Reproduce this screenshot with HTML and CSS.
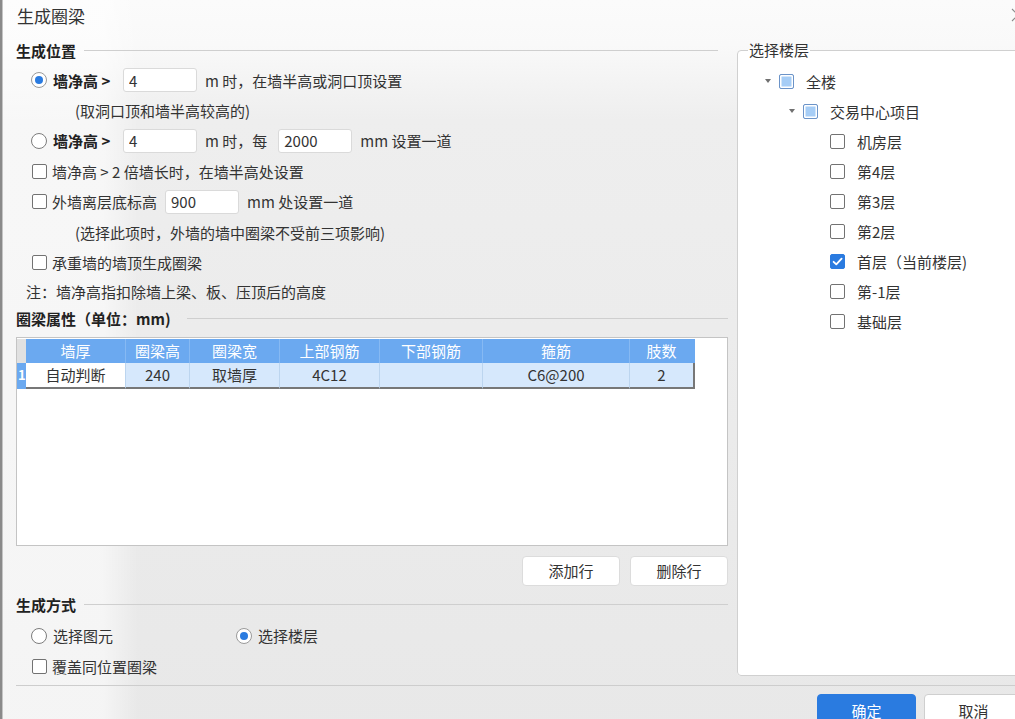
FILE: index.html
```html
<!DOCTYPE html>
<html lang="zh-CN">
<head>
<meta charset="utf-8">
<title>生成圈梁</title>
<link rel="stylesheet" href="styles.css">
</head>
<body>
<div class="dialog">
  <div class="titlebar">
    <span class="title">生成圈梁</span>
    <svg class="close" width="14" height="14" viewBox="0 0 14 14"><path d="M1 1 L13 13 M13 1 L1 13" stroke="#8a8a8a" stroke-width="1.1" fill="none"/></svg>
  </div>
  <div class="main">
    <div class="left">
      <div class="sec sec-first"><span>生成位置</span></div>
      <div class="opt">
        <span class="radio on"></span>
        <b class="lbl">墙净高 &gt;</b>
        <input class="inp" type="text" value="4">
        <span>m 时，在墙半高或洞口顶设置</span>
      </div>
      <div class="opt sub">(取洞口顶和墙半高较高的)</div>
      <div class="opt">
        <span class="radio"></span>
        <b class="lbl">墙净高 &gt;</b>
        <input class="inp" type="text" value="4">
        <span class="lbl2">m 时，每</span>
        <input class="inp" type="text" value="2000">
        <span>mm 设置一道</span>
      </div>
      <div class="opt">
        <span class="cb"></span>
        <span>墙净高 &gt; 2 倍墙长时，在墙半高处设置</span>
      </div>
      <div class="opt">
        <span class="cb"></span>
        <span>外墙离层底标高</span>
        <input class="inp" type="text" value="900">
        <span>mm 处设置一道</span>
      </div>
      <div class="opt sub">(选择此项时，外墙的墙中圈梁不受前三项影响)</div>
      <div class="opt">
        <span class="cb"></span>
        <span>承重墙的墙顶生成圈梁</span>
      </div>
      <div class="opt note">注：墙净高指扣除墙上梁、板、压顶后的高度</div>
      <div class="sec sec-second"><span>圈梁属性（单位：mm)</span></div>
      <div class="gridbox">
        <table class="grid">
          <colgroup>
            <col style="width:9px"><col style="width:100px"><col style="width:64px"><col style="width:90px"><col style="width:100px"><col style="width:103px"><col style="width:147px"><col style="width:65px">
          </colgroup>
          <thead>
            <tr><th class="corner"></th><th>墙厚</th><th>圈梁高</th><th>圈梁宽</th><th>上部钢筋</th><th>下部钢筋</th><th>箍筋</th><th class="hlast">肢数</th></tr>
          </thead>
          <tbody>
            <tr><td class="rh">1</td><td class="edit">自动判断</td><td>240</td><td>取墙厚</td><td>4C12</td><td></td><td>C6@200</td><td class="last">2</td></tr>
          </tbody>
        </table>
      </div>
      <div class="btns">
        <button class="btn">添加行</button>
        <button class="btn">删除行</button>
      </div>
      <div class="sec sec-third"><span>生成方式</span></div>
      <div class="opt choices">
        <span class="choice"><span class="radio"></span><span>选择图元</span></span>
        <span class="choice"><span class="radio on"></span><span>选择楼层</span></span>
      </div>
      <div class="opt">
        <span class="cb"></span>
        <span>覆盖同位置圈梁</span>
      </div>
    </div>
    <div class="right">
      <fieldset class="floors">
        <legend>选择楼层</legend>
        <div class="node l0"><span class="twist"></span><span class="cb part"></span><span>全楼</span></div>
        <div class="node l1"><span class="twist"></span><span class="cb part"></span><span>交易中心项目</span></div>
        <div class="node l2"><span class="cb"></span><span>机房层</span></div>
        <div class="node l2"><span class="cb"></span><span>第4层</span></div>
        <div class="node l2"><span class="cb"></span><span>第3层</span></div>
        <div class="node l2"><span class="cb"></span><span>第2层</span></div>
        <div class="node l2"><span class="cb checked"><svg width="13" height="13" viewBox="0 0 13 13"><path d="M2.6 6.8 L5.3 9.4 L10.6 3.6" stroke="#fff" stroke-width="1.8" fill="none" stroke-linecap="round" stroke-linejoin="round"/></svg></span><span>首层（当前楼层)</span></div>
        <div class="node l2"><span class="cb"></span><span>第-1层</span></div>
        <div class="node l2"><span class="cb"></span><span>基础层</span></div>
      </fieldset>
    </div>
  </div>
  <div class="footer">
    <button class="btn fbtn primary">确定</button>
    <button class="btn fbtn">取消</button>
  </div>
</div>
</body>
</html>
```

FILE: styles.css
```css
* { box-sizing: border-box; }
html, body { margin: 0; padding: 0; }
body {
  width: 1015px;
  height: 719px;
  overflow: hidden;
  background: #8a8a8a;
  font-family: "Noto Sans CJK SC", "Microsoft YaHei", sans-serif;
  font-size: 15px;
  color: #333;
}
.dialog {
  width: 1038px;
  height: 740px;
  margin-left: 2px;
  border-left: 1px solid #c4c4c4;
  background:
    linear-gradient(to right, rgba(255,255,255,0.55) 0, rgba(255,255,255,0.55) 100px, rgba(255,255,255,0) 135px),
    linear-gradient(to bottom, #fbfbfb 0, #f9f9f9 45px, #eeeeee 120px, #e8e8e8 100%);
}
.titlebar {
  height: 30px;
  display: flex;
  align-items: center;
  justify-content: space-between;
  padding: 0 15px 0 14px;
}
.title { font-size: 17px; color: #333; }
.close { display: block; }
.main {
  height: 655px;
  display: flex;
}
.left {
  width: 712px;
  margin-left: 13px;
  display: flex;
  flex-direction: column;
}
.right {
  flex: 1;
  margin-left: 9px;
  padding: 10px 0 9px 0;
}
.sec {
  height: 28px;
  display: flex;
  align-items: center;
  font-weight: bold;
  color: #222;
  flex-shrink: 0;
}
.sec::after {
  content: "";
  flex: 1;
  border-top: 1px solid #cfcfcf;
  margin-left: 8px;
}
.sec-first { margin-top: 6px; margin-bottom: 1px; margin-right: 10px; }
.sec-second::after { margin-left: 16px; }
.sec-third { margin-top: 5px; }
.opt {
  height: 30.4px;
  display: flex;
  align-items: center;
  gap: 8px;
  padding-left: 15px;
  white-space: nowrap;
  flex-shrink: 0;
}
.sub { padding-left: 59px; }
.note { padding-left: 10px; height: 27px; }
.lbl { font-weight: bold; color: #222; width: 62px; margin-left: -2px; }
.lbl2 { margin-right: 3px; }
.radio {
  width: 16px;
  height: 16px;
  border: 1px solid #7c7c7c;
  border-radius: 50%;
  background: #fff;
  display: grid;
  place-items: center;
  flex-shrink: 0;
}
.radio.on { border-color: #9a9a9a; }
.radio.on::after {
  content: "";
  width: 8px;
  height: 8px;
  border-radius: 50%;
  background: #2a7be0;
}
.cb {
  width: 15px;
  height: 15px;
  border: 1px solid #727272;
  border-radius: 2px;
  background: #fff;
  margin-left: 1px;
  margin-right: -3px;
  flex-shrink: 0;
  display: grid;
  place-items: center;
}
.inp {
  width: 74px;
  height: 24px;
  border: 1px solid #dadada;
  border-radius: 3px;
  background: #fff;
  padding: 0 5px;
  font: inherit;
  color: #333;
  outline: none;
}
.gridbox {
  margin-top: 4px;
  height: 209px;
  background: #fff;
  border: 1px solid #c4c4c4;
  padding-top: 1px;
  flex-shrink: 0;
}
.grid {
  border-collapse: separate;
  border-spacing: 0;
  table-layout: fixed;
  width: 678px;
}
.grid th {
  height: 24px;
  padding: 0;
  background: #6ba9f0;
  color: #fff;
  font-weight: normal;
  text-align: center;
  border-right: 1px solid #86b9f3;
}
.grid th.corner { background: #e1e1e1; border-right: none; }
.grid th.hlast { border-right: 2px solid transparent; }
.grid td {
  height: 26px;
  padding: 0;
  background: #d6e8fc;
  text-align: center;
  border-right: 1px solid #bcd5ef;
  border-bottom: 2px solid #777;
  color: #333;
}
.grid td.rh {
  background: #6ba9f0;
  color: #fff;
  font-weight: bold;
  font-size: 13px;
  text-align: left;
  padding-left: 1px;
  border-right: none;
  border-bottom-color: #6ba9f0;
}
.grid td.edit { background: #fff; }
.grid td.last { border-right: 2px solid #777; }
.btns {
  display: flex;
  justify-content: flex-end;
  gap: 10px;
  margin-top: 10px;
  flex-shrink: 0;
}
.btn {
  width: 98px;
  height: 30px;
  background: #fff;
  border: 1px solid #dcdcdc;
  border-radius: 4px;
  font: inherit;
  color: #333;
  padding: 0;
}
.choices { gap: 0; margin-top: 2px; }
.choice {
  display: flex;
  align-items: center;
  gap: 6px;
  width: 205px;
}
.floors {
  margin: 0;
  padding: 6px 10px 0 10px;
  border: 1px solid #d0d0d0;
  border-radius: 4px;
  background: #fff;
  height: 100%;
  min-width: 0;
}
.floors legend {
  padding: 0 1px;
  line-height: 20px;
  color: #333;
}
.node {
  height: 30px;
  display: flex;
  align-items: center;
  white-space: nowrap;
}
.node .cb { margin-left: 0; margin-right: 12px; }
.l0 { padding-left: 17px; }
.l1 { padding-left: 41px; }
.l2 { padding-left: 82px; }
.twist {
  width: 0;
  height: 0;
  border-left: 3.5px solid transparent;
  border-right: 3.5px solid transparent;
  border-top: 4px solid #707070;
  margin-right: 8px;
}
.cb.part {
  border-color: #6b93c8;
  background: #a6cdf6;
  box-shadow: inset 0 0 0 1.5px #fff;
}
.cb.checked {
  background: #2a7be0;
  border-color: #2a7be0;
}
.cb.checked svg { display: block; }
.footer {
  margin-left: 13px;
  border-top: 1px solid #cdcdcd;
  display: flex;
  justify-content: flex-end;
  gap: 8px;
  padding: 8px 17px 0 0;
}
.fbtn { width: 99px; height: 32px; border-color: #cfcfcf; }
.fbtn.primary { background: #2a7be0; border-color: #2a7be0; color: #fff; }
```
